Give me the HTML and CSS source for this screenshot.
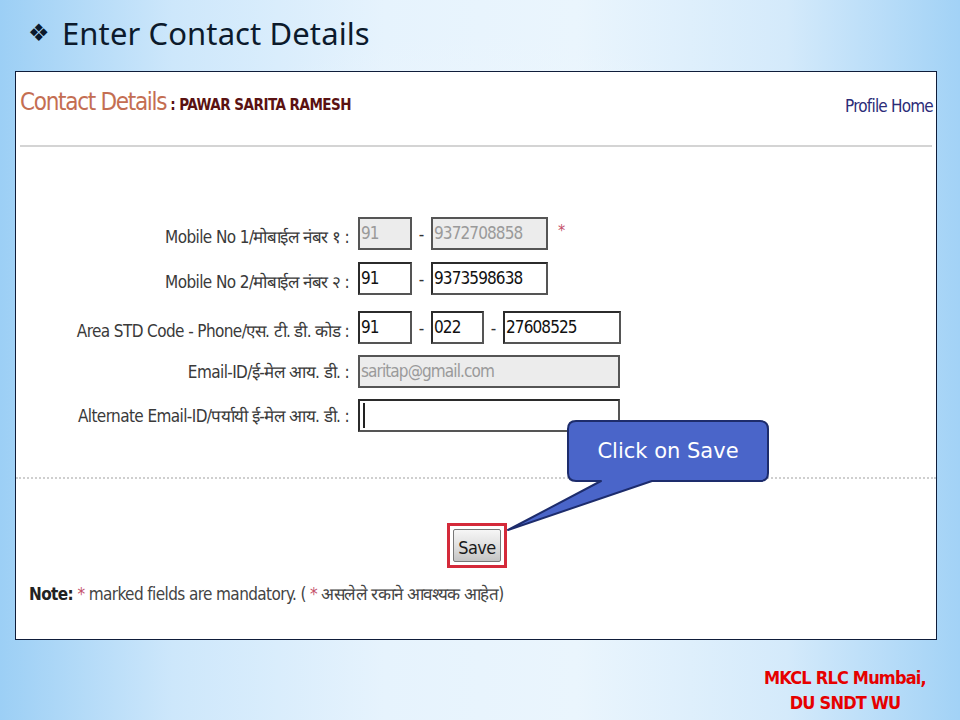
FILE: index.html
```html
<!DOCTYPE html>
<html lang="en">
<head>
<meta charset="utf-8">
<title>Enter Contact Details</title>
<link rel="stylesheet" href="styles.css">
</head>
<body>
<div class="slide">
  <h1 class="title"><span class="bullet">❖</span>Enter Contact Details</h1>

  <div class="shot">
    <div class="shot-head">
      <div class="heading"><span class="h-main">Contact Details</span><span class="h-name">: PAWAR SARITA RAMESH</span></div>
      <span class="profile">Profile Home</span>
    </div>
    <div class="rule"></div>

    <div class="form">
      <div class="row r1">
        <span class="label">Mobile No 1/मोबाईल नंबर १ :</span>
        <div class="fields">
          <span class="field w-s off">91</span><span class="dash">-</span><span class="field w-m off">9372708858</span><span class="req">*</span>
        </div>
      </div>
      <div class="row r2">
        <span class="label">Mobile No 2/मोबाईल नंबर २ :</span>
        <div class="fields">
          <span class="field w-s">91</span><span class="dash">-</span><span class="field w-m">9373598638</span>
        </div>
      </div>
      <div class="row r3">
        <span class="label">Area STD Code - Phone/एस. टी. डी. कोड :</span>
        <div class="fields">
          <span class="field w-s">91</span><span class="dash">-</span><span class="field w-std">022</span><span class="dash">-</span><span class="field w-ph">27608525</span>
        </div>
      </div>
      <div class="row r4">
        <span class="label">Email-ID/ई-मेल आय. डी. :</span>
        <div class="fields">
          <span class="field w-l off">saritap@gmail.com</span>
        </div>
      </div>
      <div class="row r5">
        <span class="label">Alternate Email-ID/पर्यायी ई-मेल आय. डी. :</span>
        <div class="fields">
          <span class="field w-l"><span class="caret"></span></span>
        </div>
      </div>
    </div>

    <div class="dotted"></div>

    <div class="save-wrap">
      <div class="save-box"><span class="save">Save</span></div>
    </div>

    <p class="note"><b>Note:</b> <span class="star">*</span> marked fields are mandatory. ( <span class="star">*</span> असलेले रकाने आवश्यक आहेत)</p>
  </div>

  <div class="credit">MKCL RLC Mumbai,<br>DU SNDT WU</div>

  <div class="callout">
    <svg class="callout-shape" width="274" height="120" viewBox="499 416 274 120">
      <path d="M576 421 H760 Q768 421 768 429 V473 Q768 481 760 481 H652 L508 530 L601 481 H576 Q568 481 568 473 V429 Q568 421 576 421 Z" fill="#4a65c9" stroke="#1d2c6c" stroke-width="2" stroke-linejoin="round"/>
    </svg>
    <span class="callout-text">Click on Save</span>
  </div>
</div>
</body>
</html>
```
FILE: styles.css
```css
* { box-sizing: border-box; }
html, body { margin: 0; padding: 0; }
body {
  width: 960px;
  height: 720px;
  overflow: hidden;
  background:
    radial-gradient(ellipse 420px 300px at 480px 330px, rgba(240,248,254,0.9) 0%, rgba(240,248,254,0) 100%),
    linear-gradient(90deg, #9ccff5 0%, #cde7fb 18%, #e6f3fd 40%, #eaf5fd 60%, #d4eafb 82%, #a2d2f6 100%);
}
.slide {
  position: relative;
  width: 960px;
  height: 720px;
  padding-top: 14px;
}
.title {
  margin: 0 0 0 28px;
  height: 38px;
  font-family: "Noto Sans", "DejaVu Sans", sans-serif;
  font-weight: 400;
  font-size: 31px;
  line-height: 38px;
  color: #0c1a2c;
  display: flex;
  align-items: center;
  letter-spacing: 0.1px;
}
.bullet {
  font-family: "DejaVu Sans", sans-serif;
  font-size: 24px;
  width: 34px;
}
.shot {
  margin: 19px 0 0 15px;
  width: 922px;
  height: 569px;
  background: #fff;
  border: 1px solid #0f1d3a;
  display: flex;
  flex-direction: column;
  font-family: "DejaVu Sans Condensed", "DejaVu Sans", sans-serif;
}
.shot-head {
  display: flex;
  justify-content: space-between;
  align-items: flex-end;
  padding: 17px 3px 0 4px;
  height: 43px;
}
.h-main {
  font-size: 24px;
  color: #c46e52;
  line-height: 26px;
  letter-spacing: -1.3px;
}
.h-name {
  font-size: 15px;
  font-weight: 700;
  color: #5a1212;
  margin-left: 4px;
  letter-spacing: -0.5px;
}
.profile {
  font-size: 17px;
  color: #2c2c78;
  line-height: 20px;
  margin-bottom: -1px;
  letter-spacing: -0.8px;
}
.rule {
  margin: 30px 4px 0 4px;
  height: 2px;
  background: #d4d4d4;
}
.form {
  margin-top: 70px;
  display: flex;
  flex-direction: column;
}
.row {
  display: flex;
  align-items: center;
  height: 33px;
}
.r2 { margin-top: 12px; }
.r3 { margin-top: 16px; }
.r4 { margin-top: 11px; }
.r5 { margin-top: 11px; }
.label {
  width: 333px;
  text-align: right;
  font-size: 17px;
  color: #3a3a3a;
  padding-top: 6px;
  letter-spacing: -0.6px;
}
.r4 .label, .r5 .label { padding-top: 0; }
.fields {
  margin-left: 9px;
  display: flex;
  align-items: center;
  height: 33px;
}
.field {
  height: 33px;
  border: 2px solid #2b2b2b;
  border-right-color: #555;
  border-bottom-color: #555;
  background: #fff;
  font-size: 17px;
  color: #111;
  line-height: 27px;
  padding-left: 1px;
  letter-spacing: -0.9px;
  display: flex;
  align-items: center;
}
.field.off { background: #ececec; color: #9a9a9a; border-color: #555; }
.w-s { width: 54px; }
.w-m { width: 117px; }
.w-std { width: 53px; }
.w-ph { width: 118px; }
.w-l { width: 262px; }
.dash {
  width: 19px;
  text-align: center;
  font-size: 17px;
  color: #333;
}
.req {
  margin-left: 10px;
  margin-top: -6px;
  color: #c4506a;
  font-size: 16px;
}
.caret {
  width: 2px;
  height: 25px;
  background: #222;
  margin-left: 2px;
}
.dotted {
  margin-top: 45px;
  border-top: 2px dotted #cfcfcf;
  height: 0;
}
.save-wrap {
  margin-top: 44px;
  display: flex;
  padding-left: 431px;
}
.save-box {
  width: 60px;
  height: 45px;
  border: 3px solid #d42a3a;
  padding: 3px;
  background: #fff;
  display: flex;
}
.save {
  flex: 1;
  border: 1px solid #777;
  border-radius: 2px;
  background: linear-gradient(180deg, #f6f6f6 0%, #dedede 55%, #c4c4c4 100%);
  font-size: 18px;
  color: #1a1a1a;
  letter-spacing: -0.6px;
  display: flex;
  align-items: center;
  justify-content: center;
  padding-top: 3px;
}
.note {
  margin: 14px 0 0 13px;
  font-size: 17px;
  color: #444;
  letter-spacing: -0.6px;
}
.note b { color: #222; }
.star { color: #c4506a; }
.credit {
  position: absolute;
  left: 745px;
  top: 665px;
  width: 200px;
  text-align: center;
  font-family: "DejaVu Sans Condensed", "DejaVu Sans", sans-serif;
  font-weight: 700;
  font-size: 18px;
  line-height: 25px;
  color: #e60000;
  letter-spacing: -0.8px;
}
.callout {
  position: absolute;
  left: 499px;
  top: 416px;
  width: 274px;
  height: 120px;
}
.callout-shape { display: block; }
.callout-text {
  position: absolute;
  left: 69px;
  top: 5px;
  width: 200px;
  height: 60px;
  display: flex;
  align-items: center;
  justify-content: center;
  font-family: "DejaVu Sans", sans-serif;
  font-size: 21px;
  color: #fff;
}
```
